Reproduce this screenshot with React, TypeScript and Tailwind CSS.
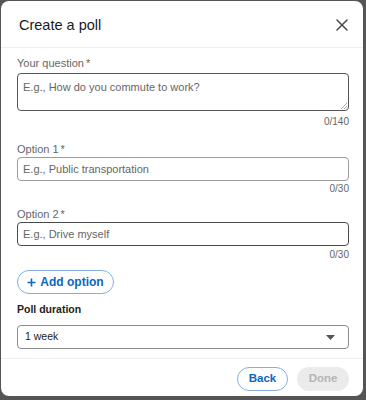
const Label = ({children, bold, required}: {children: string; bold?: boolean; required?: boolean}) => (
    <p className={bold ? 'text-[10.5px] leading-[14px] font-bold text-[#222]' : 'text-[11px] leading-[14px] text-[#666]'}>
        {children}
        {required && <span className="ml-[2px]">*</span>}
    </p>
);

const Counter = ({children, mt}: {children: string; mt: string}) => (
    <p className={`${mt} text-right text-[10px] leading-[14px] text-[#666]`}>{children}</p>
);

export default function App() {
    return (
        <div className="w-[366px] h-[400px] bg-[#555] pt-[1px] pl-[1px]" style={{fontFamily: '"Liberation Sans", Arial, sans-serif'}}>
            <div className="w-[362px] h-[395px] bg-white rounded-[8px] flex flex-col overflow-hidden">
                <div className="shrink-0 flex items-center justify-between h-[47px] pl-[18px] pr-[15px] border-b border-[#efefef]">
                    <h1 className="text-[14.5px] text-[#1a1a1a] pt-[3px]">Create a poll</h1>
                    <svg width="12" height="12" viewBox="0 0 12 12" className="mt-[2px]">
                        <path d="M1 1 L11 11 M11 1 L1 11" stroke="#4a4a4a" strokeWidth="1.5" strokeLinecap="round"/>
                    </svg>
                </div>
                <div className="shrink-0 h-[310px] pl-[16px] pr-[14px] pt-[8px] flex flex-col">
                    <Label required>Your question</Label>
                    <div className="mt-[3px] h-[38px] border border-[#555] rounded-[4px] px-[5px] relative">
                        <span className="text-[11px] leading-[14px] text-[#666]">E.g., How do you commute to work?</span>
                        <svg width="6" height="6" viewBox="0 0 6 6" className="absolute right-[1px] bottom-[1px]">
                            <path d="M6 0 L0 6 M6 3 L3 6" stroke="#999" strokeWidth="0.8"/>
                        </svg>
                    </div>
                    <Counter mt="mt-[4px]">0/140</Counter>
                    <div className="mt-[13px]">
                        <Label required>Option 1</Label>
                    </div>
                    <div className="mt-[1px] h-[24px] border border-[#9d9d9d] rounded-[4px] px-[5px] flex items-center">
                        <span className="text-[11px] text-[#666]">E.g., Public transportation</span>
                    </div>
                    <Counter mt="mt-[1px]">0/30</Counter>
                    <div className="mt-[11px]">
                        <Label required>Option 2</Label>
                    </div>
                    <div className="mt-[1px] h-[24px] border border-[#4a4a4a] rounded-[4px] px-[5px] flex items-center">
                        <span className="text-[11px] text-[#666]">E.g., Drive myself</span>
                    </div>
                    <Counter mt="mt-[2px]">0/30</Counter>
                    <button className="mt-[8px] self-start h-[24px] w-[97px] rounded-full border border-[#86aee0] text-[#0a66c2] text-[12px] font-bold flex items-center justify-center gap-[4px]">
                        <svg width="9" height="9" viewBox="0 0 9 9"><path d="M4.5 0.5 V8.5 M0.5 4.5 H8.5" stroke="#0a66c2" strokeWidth="1.6"/></svg>
                        Add option
                    </button>
                    <div className="mt-[8px]">
                        <Label bold>Poll duration</Label>
                    </div>
                    <div className="mt-[9px] h-[24px] border border-[#8c8c8c] rounded-[4px] pl-[7px] pr-[13px] flex items-center justify-between">
                        <span className="text-[10.5px] text-[#222]">1 week</span>
                        <svg width="9" height="5" viewBox="0 0 9 5"><path d="M0 0 H9 L4.5 5 Z" fill="#555"/></svg>
                    </div>
                </div>
                <div className="flex-1 border-t border-[#efefef] flex items-start justify-end gap-[9px] pr-[14px] pt-[8px]">
                    <button className="h-[24px] w-[51px] rounded-full border border-[#86aee0] text-[#0a66c2] text-[11.5px] font-bold">Back</button>
                    <button className="h-[24px] w-[52px] rounded-full bg-[#ebebeb] text-[#b5b5b5] text-[11.5px] font-bold">Done</button>
                </div>
            </div>
        </div>
    );
}
